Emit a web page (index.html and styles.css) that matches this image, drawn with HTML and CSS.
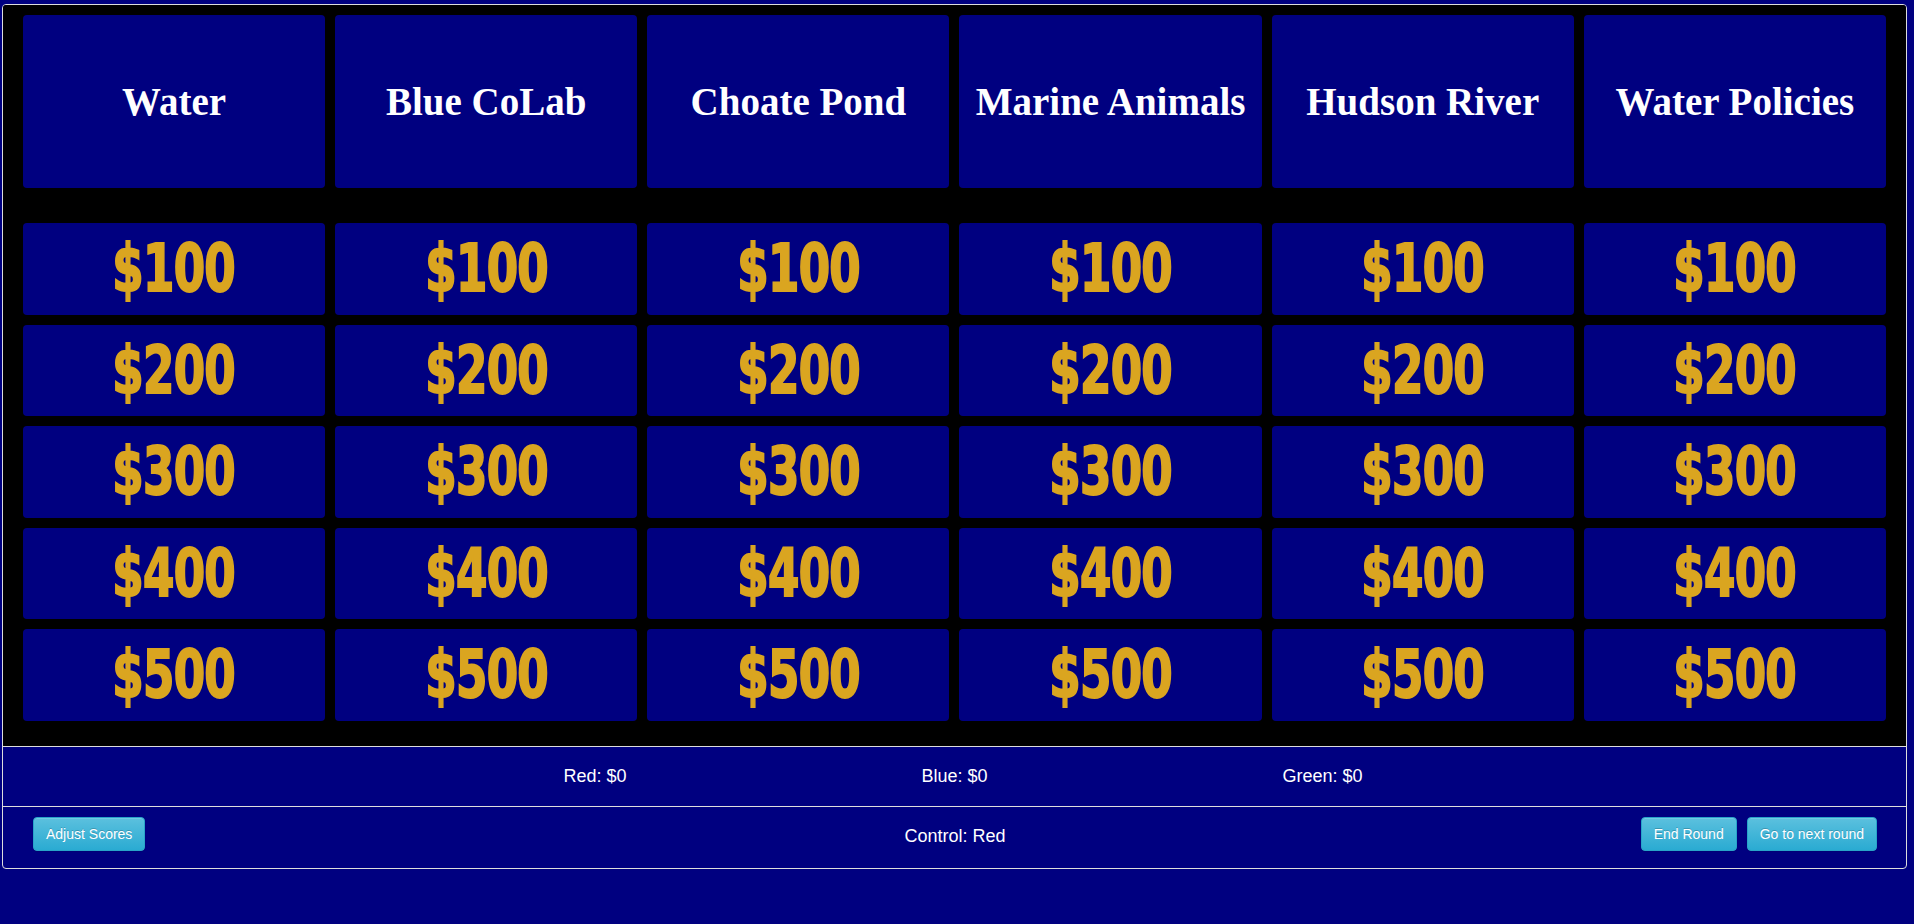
FILE: index.html
```html
<!doctype html>
<html>
<head>
    <title>Jeopardy Board</title>
    <meta charset="utf-8"/>
    <link rel="stylesheet" href="styles.css">
</head>
<body>
    <div class="panel">
        <div class="board">
            <!-- categories -->
            <div class="tile category">Water</div>
            <div class="tile category">Blue CoLab</div>
            <div class="tile category">Choate Pond</div>
            <div class="tile category">Marine Animals</div>
            <div class="tile category">Hudson River</div>
            <div class="tile category">Water Policies</div>

            <div class="spacer"></div>

            <div class="tile money"><span>$100</span></div>
            <div class="tile money"><span>$100</span></div>
            <div class="tile money"><span>$100</span></div>
            <div class="tile money"><span>$100</span></div>
            <div class="tile money"><span>$100</span></div>
            <div class="tile money"><span>$100</span></div>

            <div class="tile money"><span>$200</span></div>
            <div class="tile money"><span>$200</span></div>
            <div class="tile money"><span>$200</span></div>
            <div class="tile money"><span>$200</span></div>
            <div class="tile money"><span>$200</span></div>
            <div class="tile money"><span>$200</span></div>

            <div class="tile money"><span>$300</span></div>
            <div class="tile money"><span>$300</span></div>
            <div class="tile money"><span>$300</span></div>
            <div class="tile money"><span>$300</span></div>
            <div class="tile money"><span>$300</span></div>
            <div class="tile money"><span>$300</span></div>

            <div class="tile money"><span>$400</span></div>
            <div class="tile money"><span>$400</span></div>
            <div class="tile money"><span>$400</span></div>
            <div class="tile money"><span>$400</span></div>
            <div class="tile money"><span>$400</span></div>
            <div class="tile money"><span>$400</span></div>

            <div class="tile money"><span>$500</span></div>
            <div class="tile money"><span>$500</span></div>
            <div class="tile money"><span>$500</span></div>
            <div class="tile money"><span>$500</span></div>
            <div class="tile money"><span>$500</span></div>
            <div class="tile money"><span>$500</span></div>
        </div>
        <div class="scores">
            <span>Red: $0</span>
            <span>Blue: $0</span>
            <span>Green: $0</span>
        </div>
        <div class="controls">
            <div class="left">
                <button class="btn">Adjust Scores</button>
            </div>
            <div class="turn">Control: Red</div>
            <div class="right">
                <button class="btn">End Round</button>
                <button class="btn">Go to next round</button>
            </div>
        </div>
    </div>
</body>
</html>
```

FILE: styles.css
```css
body {
    background-color: #000080;
    margin: 4px 7px 0 2px;
    font-family: "Liberation Sans", Arial, sans-serif;
    color: white;
}
.panel {
    border: 1px solid #ddd;
    border-radius: 4px;
    overflow: hidden;
}
.board {
    background-color: black;
    display: grid;
    grid-template-columns: repeat(6, 1fr);
    grid-auto-rows: 91.5px;
    grid-template-rows: 173px 15px;
    column-gap: 10px;
    row-gap: 10px;
    padding: 10px 20px 25px 20px;
}
.spacer {
    grid-column: 1 / 7;
}
.tile {
    background-color: #000080;
    border-radius: 4px;
    display: flex;
    align-items: center;
    justify-content: center;
    text-align: center;
}
.category {
    font-family: "Liberation Serif", "Times New Roman", serif;
    font-weight: bold;
    font-size: 39px;
}
.money {
    font-family: "DejaVu Sans", sans-serif;
    font-stretch: condensed;
    font-weight: bold;
    font-size: 66px;
    color: #daa520;
}
/* no Impact here, so squeeze a bold condensed face */
.money span {
    display: inline-block;
    transform: scaleX(0.76);
    -webkit-text-stroke: 2px #daa520;
    letter-spacing: -1px;
}
.scores {
    border-top: 1px solid #ddd;
    height: 59px;
    display: flex;
    align-items: center;
    justify-content: center;
    gap: 295px;
    padding-left: 17px;
    font-size: 18px;
}
.controls {
    border-top: 1px solid #ddd;
    height: 51px;
    padding: 10px 29px 0 30px;
    display: grid;
    grid-template-columns: 1fr auto 1fr;
    align-items: start;
}
.turn {
    font-size: 18px;
    line-height: 34px;
    padding-top: 2px;
}
.right {
    display: flex;
    justify-content: flex-end;
    gap: 10px;
}
.btn {
    font-family: "Liberation Sans", Arial, sans-serif;
    font-size: 14px;
    line-height: 20px;
    padding: 6px 12px;
    color: white;
    text-shadow: 0 -1px 0 rgba(0, 0, 0, .2);
    background-color: #5bc0de;
    background-image: linear-gradient(to bottom, #5bc0de 0, #2aabd2 100%);
    border: 1px solid #28a4c9;
    border-radius: 4px;
    box-shadow: inset 0 1px 0 rgba(255, 255, 255, .15), 0 1px 1px rgba(0, 0, 0, .075);
    cursor: pointer;
}
```
